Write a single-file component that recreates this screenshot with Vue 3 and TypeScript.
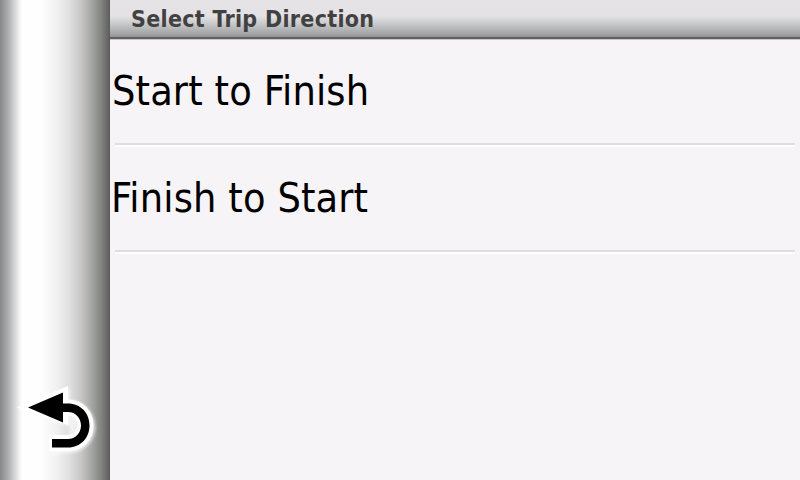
<script setup lang="ts">
const title: string = 'Select Trip Direction'
const options: string[] = ['Start to Finish', 'Finish to Start']
</script>

<template>
  <div class="screen">
    <aside class="rail">
      <button class="back" type="button" aria-label="Back">
        <svg width="94" height="80" viewBox="10 380 94 80">
          <defs>
            <filter id="glow" x="-20%" y="-20%" width="140%" height="140%">
              <feGaussianBlur stdDeviation="1.8" />
            </filter>
          </defs>
          <g filter="url(#glow)" opacity="0.65" transform="translate(1.5 2)">
            <path d="M17 407.5L68 386V398C82 398 94 411 94 425C94 439 82 451 68 451H49V436H68V424Z" fill="#fff" />
          </g>
          <path
            d="M17 407.5L68 386V399.5C83 399.5 93.500 411 93.500 425.500C93.500 440 83 451 68 451H49V435H66C73 435 77.500 431 77.500 425.500C77.500 420 74 416 68 415.500V425Z"
            fill="#fff"
          />
          <path
            d="M28 407.500L63 392.500V403.500H68C80.500 403.500 89.500 413 89.500 425.500C89.500 438 80.500 447.500 68 447.500H52V439H68C75.500 439 81 433 81 425.500C81 418 75.500 412 68 412H63V422.500Z"
            fill="#000"
          />
        </svg>
      </button>
    </aside>
    <main class="panel">
      <header class="bar"><h1 class="title">{{ title }}</h1></header>
      <ul class="list">
        <li v-for="option in options" :key="option" class="row">{{ option }}</li>
      </ul>
    </main>
  </div>
</template>

<style>
body {
  margin: 0;
  overflow: hidden;
}
</style>

<style scoped>
.screen {
  display: flex;
  width: 800px;
  height: 480px;
  background: #f7f4f7;
  font-family: "DejaVu Sans Condensed", "DejaVu Sans", sans-serif;
  font-stretch: condensed;
}
.rail {
  display: flex;
  align-items: flex-end;
  box-sizing: border-box;
  width: 110px;
  padding: 0 0 20px 10px;
  background: linear-gradient(90deg, #858788 0, #a5a7a8 7px, #d0d1d2 14px, #f5f5f5 20px, #fff 23px, #fdfdfd 42px, #f2f2f2 56px, #dedede 70px, #c5c4c5 82px, #a0a29f 93px, #838582 101px, #656565 108px, #5c595c 110px);
}
.back {
  display: block;
  padding: 0;
  border: 0;
  background: none;
}
.back svg {
  display: block;
}
.panel {
  flex: 1;
}
.bar {
  box-sizing: border-box;
  height: 40px;
  padding-left: 21px;
  background: linear-gradient(180deg, #e6e3e6 0, #e4e2e4 16px, #d3d3d4 21px, #bcbdbe 27px, #a3a4a5 34px, #939395 37px, #625f62 37px, #625f62 39px, #c9c7c9 39px, #c9c7c9 40px);
}
.title {
  margin: 0;
  color: #424142;
  font-size: 23px;
  font-weight: 700;
  letter-spacing: 0.3px;
  line-height: 38px;
  white-space: nowrap;
}
.list {
  margin: 0;
  padding: 0 5px;
  list-style: none;
}
.row {
  box-sizing: border-box;
  height: 107px;
  padding-top: 2px;
  border-bottom: 2px solid #dfdddf;
  box-shadow: 0 2px #fff;
  color: #000;
  font-size: 41px;
  letter-spacing: 0.13px;
  line-height: 102px;
  text-indent: -4px;
  white-space: nowrap;
}
.row:first-child {
  height: 105px;
  padding-top: 0;
  text-indent: -3px;
}
</style>
